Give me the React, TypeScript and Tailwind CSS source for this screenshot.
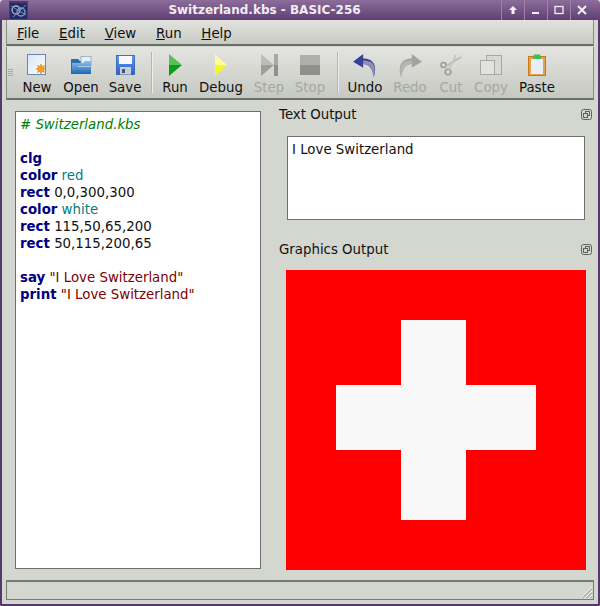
import React from "react";

const Logo = () => (
  <svg width="19" height="18" viewBox="0 0 19 18" className="block">
    <rect width="19" height="18" fill="#4a3a78" />
    <rect x="1" y="2" width="17" height="16" fill="#1f2c68" />
    <circle cx="7" cy="9" r="4" fill="none" stroke="#aeb6d4" strokeWidth="1.300" />
    <circle cx="12" cy="11" r="4" fill="none" stroke="#8f9cc4" strokeWidth="1.300" />
    <path d="M2 5 L17 14 M17 4 L4 16" stroke="#7e8ab8" strokeWidth="1" />
  </svg>
);

const NewIcon = () => (
  <svg width="20" height="22" viewBox="0 0 20 22">
    <defs>
      <linearGradient id="ng" x1="0" y1="0" x2="1" y2="1">
        <stop offset="0" stopColor="#d8e4f4" />
        <stop offset="1" stopColor="#ffffff" />
      </linearGradient>
    </defs>
    <rect x=".5" y=".5" width="18" height="20" fill="url(#ng)" stroke="#6a88ae" />
    <path d="M14 10 l1 2.500 2.500-1-1 2.500 2.500 1-2.500 1 1 2.500-2.500-1-1 2.500-1-2.500-2.500 1 1-2.500-2.500-1 2.500-1-1-2.500 2.500 1z" fill="#f0a020" stroke="#d07a10" strokeWidth=".5" />
  </svg>
);
const OpenIcon = () => (
  <svg width="21" height="19" viewBox="0 0 21 19">
    <defs>
      <linearGradient id="og" x1="0" y1="0" x2="0" y2="1">
        <stop offset="0" stopColor="#8fc0ec" />
        <stop offset="1" stopColor="#1f66b4" />
      </linearGradient>
    </defs>
    <path d="M0 3h7l2 2h4v13H0z" fill="#2a6cb0" />
    <rect x="10" y=".5" width="10" height="10" fill="#e8eef4" stroke="#7ea2c6" strokeWidth=".7" />
    <path d="M1 7h11l2-2h6v13H1z" fill="url(#og)" />
    <path d="M7 10h13v1H7z" fill="#cfe4f8" opacity=".7" />
  </svg>
);
const SaveIcon = () => (
  <svg width="19" height="20" viewBox="0 0 19 20">
    <defs>
      <linearGradient id="sg" x1="0" y1="0" x2="0" y2="1">
        <stop offset="0" stopColor="#5f9aec" />
        <stop offset="1" stopColor="#2a62d0" />
      </linearGradient>
    </defs>
    <rect x=".5" y=".5" width="18" height="19" fill="url(#sg)" stroke="#1f4fa8" strokeWidth=".7" />
    <rect x="3" y="1" width="13" height="8" fill="#f6f8fb" />
    <rect x="4" y="12" width="11" height="7.500" fill="#c9ced6" />
    <rect x="6" y="14" width="3" height="4" fill="#4a5568" />
  </svg>
);
const RunIcon = ({ yellow }: { yellow?: boolean }) => (
  <svg width={yellow ? 12 : 13} height="22" viewBox="0 0 12 22" preserveAspectRatio="none">
    {yellow ? (
      <>
        <path d="M0 0 L12 11 L0 11z" fill="#fdfd9a" />
        <path d="M0 11 L12 11 L0 22z" fill="#f6f62a" />
      </>
    ) : (
      <>
        <path d="M0 0 L12 11 L0 11z" fill="#58c058" />
        <path d="M0 11 L12 11 L0 22z" fill="#0c9c1c" />
      </>
    )}
  </svg>
);
const StepIcon = () => (
  <svg width="17" height="22" viewBox="0 0 17 22">
    <path d="M0 0 L13 11 L0 11z" fill="#bcbdb9" />
    <path d="M0 11 L13 11 L0 22z" fill="#9e9f9b" />
    <rect x="13" y="0" width="4" height="11" fill="#a8a9a5" />
    <rect x="13" y="11" width="4" height="11" fill="#8f908c" />
  </svg>
);
const StopIcon = () => (
  <svg width="20" height="20" viewBox="0 0 20 20">
    <rect width="20" height="10" fill="#aeafab" />
    <rect y="10" width="20" height="10" fill="#8f908c" />
  </svg>
);
const UndoIcon = ({ gray }: { gray?: boolean }) => (
  <svg width="24" height="23" viewBox="0 0 26 25" style={gray ? { transform: "scaleX(-1)" } : undefined}>
    <path
      d="M11 0 L0 8.500 L11 15 L11 11 C17 11 21 15 22.500 25 C26 15 24 5 11 5z"
      fill={gray ? "#a2a3a0" : "#3a3f98"}
    />
    <path d="M11 11 C17 11 21 15 22.500 25 C24.500 18 24 12 20 9 C17 7.500 14 7 11 7z" fill={gray ? "#b4b5b1" : "#8e8fb4"} />
  </svg>
);
const CutIcon = () => (
  <svg width="22" height="21" viewBox="0 0 22 21" fill="none">
    <circle cx="3.500" cy="10" r="2.500" stroke="#9c9d99" strokeWidth="1.600" />
    <circle cx="8" cy="17" r="2.800" stroke="#9c9d99" strokeWidth="1.600" />
    <path d="M5.500 11.500 L21 2" stroke="#b8b9b5" strokeWidth="1.600" />
    <path d="M9 14.500 L16 0" stroke="#c2c3bf" strokeWidth="1.600" />
  </svg>
);
const CopyIcon = () => (
  <svg width="22" height="20" viewBox="0 0 22 20">
    <rect x="6.500" y=".5" width="15" height="19" fill="#d8d9d5" stroke="#a8a9a5" />
    <rect x=".5" y="5.500" width="14" height="14" fill="#e2e3df" stroke="#a8a9a5" />
  </svg>
);
const PasteIcon = () => (
  <svg width="18" height="22" viewBox="0 0 18 22">
    <rect x=".5" y="2.500" width="17" height="19" fill="#e8a24c" stroke="#c87818" />
    <rect x="3" y="5" width="12" height="15" fill="#e6eef8" />
    <path d="M5 3 L6 .5 H12 L13 3 V5 H5z" fill="#3cc050" />
  </svg>
);

const tools: (null | { label: string; icon: React.ReactNode; off?: boolean; w: string })[] = [
  { label: "New", icon: <NewIcon />, w: "w-[44px]" },
  { label: "Open", icon: <OpenIcon />, w: "w-[44px]" },
  { label: "Save", icon: <SaveIcon />, w: "w-[44px]" },
  null,
  { label: "Run", icon: <RunIcon />, w: "w-[36px]" },
  { label: "Debug", icon: <RunIcon yellow />, w: "w-[56px]" },
  { label: "Step", icon: <StepIcon />, off: true, w: "w-[40px]" },
  { label: "Stop", icon: <StopIcon />, off: true, w: "w-[42px] mr-[2px]" },
  null,
  { label: "Undo", icon: <UndoIcon />, w: "w-[44px]" },
  { label: "Redo", icon: <UndoIcon gray />, off: true, w: "w-[46px]" },
  { label: "Cut", icon: <CutIcon />, off: true, w: "w-[36px]" },
  { label: "Copy", icon: <CopyIcon />, off: true, w: "w-[44px]" },
  { label: "Paste", icon: <PasteIcon />, w: "w-[48px]" },
];

const FloatIcon = () => (
  <svg width="11" height="11" viewBox="0 0 11 11" fill="none" stroke="#60625c" className="block">
    <rect x=".5" y=".5" width="10" height="10" rx="2" />
    <rect x="4.500" y="2.500" width="4" height="4" />
    <rect x="2.500" y="4.500" width="4" height="4" fill="#d4d6d0" />
  </svg>
);

const K = ({ children }: { children: React.ReactNode }) => <span className="font-bold text-[#000080]">{children}</span>;
const V = ({ children }: { children: React.ReactNode }) => <span className="text-[#008080]">{children}</span>;
const S = ({ children }: { children: React.ReactNode }) => <span className="text-[#800000]">{children}</span>;

export default function App() {
  return (
    <div className="w-[600px] h-[606px] flex flex-col overflow-hidden bg-[#d4d6d0] text-[13.33px] leading-[17px] text-[#111] font-['DejaVu_Sans',sans-serif]">
      {/* title bar */}
      <div className="h-[20px] shrink-0 flex items-center pl-[9px] pr-[7px] rounded-t-[4px] bg-gradient-to-b from-[#8d6d9a] to-[#5f3f72]">
        <Logo />
        <div className="flex-1 text-center font-bold text-[12px] text-[#f1edf3]">
          Switzerland.kbs - BASIC-256
        </div>
        <div className="flex items-center text-[#f4f0f6]">
          <div className="w-[23px] h-[20px] flex items-center justify-center border-l border-[#9c82a8]">
            <svg width="10" height="10" viewBox="0 0 10 10"><path d="M5 1 L9 5 H6.500 V9 H3.500 V5 H1z" fill="currentColor" /></svg>
          </div>
          <div className="w-[23px] h-[20px] flex items-center justify-center border-l border-[#9c82a8]">
            <svg width="10" height="10" viewBox="0 0 10 10"><rect x="1" y="7" width="7" height="2" fill="currentColor" /></svg>
          </div>
          <div className="w-[23px] h-[20px] flex items-center justify-center border-l border-[#9c82a8]">
            <svg width="10" height="10" viewBox="0 0 10 10" fill="none"><rect x="1" y="1.500" width="8" height="7" stroke="currentColor" strokeWidth="1.300" /></svg>
          </div>
          <div className="w-[23px] h-[20px] flex items-center justify-center border-l border-[#9c82a8]">
            <svg width="10" height="10" viewBox="0 0 10 10"><path d="M1 1 L9 9 M9 1 L1 9" stroke="currentColor" strokeWidth="2" /></svg>
          </div>
        </div>
      </div>

      {/* body with purple frame */}
      <div className="flex-1 min-h-0 flex flex-col border-x-[2px] border-b-[2px] border-[#54396a] rounded-b-[2px]">
        {/* menu */}
        <div className="h-[26px] shrink-0 mx-[4px] flex items-center pl-[10px] pt-[2px] gap-[19.75px] bg-gradient-to-b from-[#e2e3de] to-[#c8cac4] border-x border-x-[#8a8c86] border-b-[2px] border-b-[#6c6e68]">
          <span><u>F</u>ile</span>
          <span><u>E</u>dit</span>
          <span><u>V</u>iew</span>
          <span><u>R</u>un</span>
          <span><u>H</u>elp</span>
        </div>

        {/* toolbar */}
        <div className="h-[53px] shrink-0 mx-[4px] flex items-stretch pl-[1px] mt-[1px] bg-gradient-to-b from-[#e4e5e0] to-[#c6c8c2] border-x border-x-[#8a8c86] border-b-[2px] border-b-[#6c6e68]">
          <div className="w-[5px] h-[10px] self-center mr-[2px] mt-[2px] flex flex-col gap-[1px]">
            <div className="h-[1px] bg-[#a9aba5]" />
            <div className="h-[1px] bg-[#a9aba5]" />
            <div className="h-[1px] bg-[#a9aba5]" />
            <div className="h-[1px] bg-[#a9aba5]" />
          </div>
          {tools.map((t, i) =>
            t === null ? (
              <div key={i} className="w-[2px] mx-[4px] my-[5px] bg-[#b4b6b0] border-r border-[#eeefeb]" />
            ) : (
              <div key={t.label} className={`${t.w} flex flex-col items-center pt-[5px]`}>
                <div className="h-[26px] flex items-center justify-center">{t.icon}</div>
                <span className={`mt-[1px] ${t.off ? "text-[#a6a8a2]" : "text-[#111]"}`}>{t.label}</span>
              </div>
            )
          )}
        </div>

        {/* main */}
        <div className="flex-1 min-h-0 flex pl-[13px] pr-[6px] pt-[11px]">
          {/* editor */}
          <div className="w-[246px] h-[458px] shrink-0 bg-white border border-[#6e706a] pl-[4px] pt-[4px]">
            <div className="italic text-[#007f00]"># Switzerland.kbs</div>
            <div className="h-[17px]" />
            <div><K>clg</K></div>
            <div><K>color</K> <V>red</V></div>
            <div><K>rect</K> 0,0,300,300</div>
            <div><K>color</K> <V>white</V></div>
            <div><K>rect</K> 115,50,65,200</div>
            <div><K>rect</K> 50,115,200,65</div>
            <div className="h-[17px]" />
            <div><K>say</K> <S>"I Love Switzerland"</S></div>
            <div><K>print</K> <S>"I Love Switzerland"</S></div>
          </div>

          {/* right column */}
          <div className="flex-1 flex flex-col pl-[18px]">
            <div className="flex items-center justify-between h-[17px] -mt-[5px]">
              <span>Text Output</span>
              <FloatIcon />
            </div>
            <div className="ml-[8px] mt-[13px] w-[298px] h-[84px] bg-white border border-[#6e706a] pl-[4px] pt-[4px]">
              I Love Switzerland
            </div>
            <div className="flex items-center justify-between h-[17px] mt-[21px]">
              <span>Graphics Output</span>
              <FloatIcon />
            </div>
            <svg width="300" height="300" viewBox="0 0 300 300" className="ml-[7px] mt-[12px] block shrink-0">
              <rect width="300" height="300" fill="#ff0000" />
              <rect x="115" y="50" width="65" height="200" fill="#f8f8f8" />
              <rect x="50" y="115" width="200" height="65" fill="#f8f8f8" />
            </svg>
          </div>
        </div>

        {/* status bar */}
        <div className="h-[20px] shrink-0 mx-[4px] mb-[4px] relative border border-[#787a74] border-t-[2px] bg-[#d4d6d0]">
          <svg width="14" height="14" viewBox="0 0 14 14" className="absolute right-0 bottom-0">
            <path d="M13 2 L2 13 M13 6 L6 13 M13 10 L10 13" stroke="#f2f3ef" strokeWidth="1" />
            <path d="M13 3.500 L3.500 13 M13 7.500 L7.500 13 M13 11.500 L11.500 13" stroke="#8e908a" strokeWidth="1" />
          </svg>
        </div>
      </div>
    </div>
  );
}
